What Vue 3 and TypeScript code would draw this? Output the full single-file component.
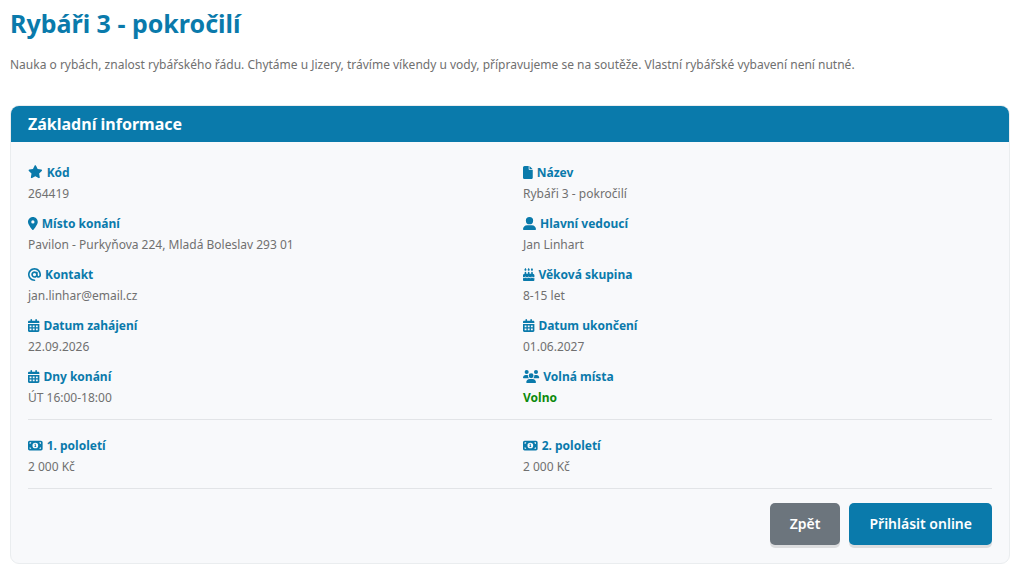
<script setup lang="ts">
interface Icon {
  width: number
  top?: number
  path: string
}

interface Field {
  icon: string
  label: string
  value: string
  free?: boolean
}

const icons: Record<string, Icon> = {
  star: {
    width: 576,
    top: 32,
    path: 'M316.9 18C311.6 7 300.4 0 288.1 0s-23.4 7-28.8 18L195 150.3 51.4 171.5c-12 1.8-22 10.2-25.7 21.7s-.7 24.2 7.9 32.7L137.8 329 113.2 474.7c-2 12 3 24.2 12.9 31.3s23 8 33.8 2.3l128.3-68.5 128.3 68.5c10.8 5.7 23.9 4.9 33.8-2.3s14.9-19.3 12.9-31.3L438.5 329 542.7 225.9c8.6-8.5 11.7-21.2 7.9-32.7s-13.7-19.9-25.7-21.7L381.2 150.3 316.9 18z',
  },
  file: {
    width: 384,
    path: 'M0 64C0 28.7 28.7 0 64 0H224V128c0 17.7 14.3 32 32 32H384V448c0 35.3-28.7 64-64 64H64c-35.3 0-64-28.7-64-64V64zM384 128H256V0L384 128z',
  },
  place: {
    width: 384,
    path: 'M215.7 499.2C267 435 384 279.4 384 192C384 86 298 0 192 0S0 86 0 192c0 87.4 117 243 168.3 307.2c12.3 15.3 35.1 15.3 47.4 0zM192 128a64 64 0 1 1 0 128 64 64 0 1 1 0-128z',
  },
  user: {
    width: 512,
    path: 'M256 288A144 144 0 1 0 256 0a144 144 0 1 0 0 288zm-94.7 32C72.2 320 0 392.2 0 481.3c0 17 13.8 30.7 30.7 30.7H481.3c17 0 30.7-13.8 30.7-30.7C512 392.2 439.8 320 350.7 320H161.3z',
  },
  at: {
    width: 512,
    path: 'M256 64C150 64 64 150 64 256s86 192 192 192c17.7 0 32 14.3 32 32s-14.3 32-32 32C114.6 512 0 397.4 0 256S114.6 0 256 0S512 114.6 512 256v32c0 53-43 96-96 96c-29.3 0-55.6-13.2-73.2-33.9C320 371.1 289.5 384 256 384c-70.7 0-128-57.3-128-128s57.3-128 128-128c27.9 0 53.7 8.9 74.7 24.1c5.7-5 13.1-8.1 21.3-8.1c17.7 0 32 14.3 32 32v112c0 17.7 14.3 32 32 32s32-14.3 32-32V256c0-106-86-192-192-192zm64 192a64 64 0 1 0-128 0 64 64 0 1 0 128 0z',
  },
  cake: {
    width: 448,
    path: 'M86.4 5.5L61.8 47.6C58 54.1 56 61.6 56 69.2V72c0 22.1 17.9 40 40 40s40-17.9 40-40V69.2c0-7.6-2-15-5.8-21.6L105.6 5.5C103.6 2.1 100 0 96 0s-7.6 2.1-9.6 5.5zm128 0L189.8 47.6c-3.8 6.5-5.8 14-5.8 21.6V72c0 22.1 17.9 40 40 40s40-17.9 40-40V69.2c0-7.6-2-15-5.8-21.6L233.6 5.5C231.6 2.1 228 0 224 0s-7.6 2.1-9.6 5.5zM317.8 47.6c-3.8 6.5-5.8 14-5.8 21.6V72c0 22.1 17.9 40 40 40s40-17.9 40-40V69.2c0-7.6-2-15-5.8-21.6L361.6 5.5C359.6 2.1 356 0 352 0s-7.6 2.1-9.6 5.5L317.8 47.6zM128 176c0-17.7-14.3-32-32-32s-32 14.3-32 32v48c-35.3 0-64 28.7-64 64v71c8.3 5.2 18.1 9 28.8 9c13.5 0 27.2-6.1 38.4-13.4c5.4-3.5 9.9-7.1 13-9.7c1.5-1.3 2.7-2.4 3.5-3.1c5.9-5.7 16.2-5.8 22.3-.2c3 2.8 6.3 5.5 9.6 8c11.5 8.9 25.7 18.4 44.4 18.4s32.9-9.5 44.4-18.4c3.3-2.5 6.6-5.2 9.6-8c6-5.5 15.9-5.5 22 0c3 2.8 6.3 5.5 9.6 8c11.5 8.9 25.7 18.4 44.4 18.4s32.9-9.5 44.4-18.4c3.3-2.5 6.6-5.2 9.6-8c6.1-5.6 16.4-5.5 22.3 .2c5.1 4.7 10.7 9 16.5 12.8c11.2 7.3 24.9 13.4 38.4 13.4c10.7 0 20.5-3.9 28.8-9V288c0-35.3-28.7-64-64-64V176c0-17.7-14.3-32-32-32s-32 14.3-32 32v48H256V176c0-17.7-14.3-32-32-32s-32 14.3-32 32v48H128V176zM448 394.6c-8.5 3.3-18.2 5.4-28.8 5.4c-22.5 0-42.4-9.9-55.8-18.6c-4.1-2.7-7.8-5.4-10.9-7.8c-2.8 2.4-6.1 5-9.8 7.5C329.8 390 310.6 400 288 400s-41.8-10-54.6-18.9c-3.5-2.4-6.7-4.9-9.4-7.2c-2.7 2.3-5.9 4.7-9.4 7.2C201.8 390 182.6 400 160 400s-41.8-10-54.6-18.9c-3.7-2.6-7-5.2-9.8-7.5c-3.1 2.4-6.8 5.1-10.9 7.8C71.2 390.1 51.3 400 28.8 400c-10.6 0-20.3-2.2-28.8-5.4V480c0 17.7 14.3 32 32 32H416c17.7 0 32-14.3 32-32V394.6z',
  },
  calendar: {
    width: 448,
    path: 'M128 0c17.7 0 32 14.3 32 32V64H288V32c0-17.7 14.3-32 32-32s32 14.3 32 32V64h48c26.5 0 48 21.5 48 48v48H0V112C0 85.5 21.5 64 48 64H96V32c0-17.7 14.3-32 32-32zM0 192H448V464c0 26.5-21.5 48-48 48H48c-26.5 0-48-21.5-48-48V192zM64 256v64h72v-64zM188 256v64h72v-64zM312 256v64h72v-64zM64 376v64h72v-64zM188 376v64h72v-64zM312 376v64h72v-64z',
  },
  group: {
    width: 640,
    path: 'M144 0a80 80 0 1 1 0 160A80 80 0 1 1 144 0zM512 0a80 80 0 1 1 0 160A80 80 0 1 1 512 0zM0 298.7C0 239.8 47.8 192 106.7 192h42.7c15.9 0 31 3.5 44.6 9.7c-1.3 7.2-1.9 14.7-1.9 22.3c0 38.2 16.8 72.5 43.3 96H21.3C9.6 320 0 310.4 0 298.7zM404.6 320c26.6-23.5 43.3-57.8 43.3-96c0-7.6-.7-15-1.9-22.3c13.6-6.3 28.7-9.7 44.6-9.7h42.7C592.2 192 640 239.8 640 298.7c0 11.8-9.6 21.3-21.3 21.3H404.6zM224 224a96 96 0 1 1 192 0 96 96 0 1 1-192 0zM128 485.3C128 411.7 187.7 352 261.3 352H378.7C452.3 352 512 411.7 512 485.3c0 14.7-11.9 26.7-26.7 26.7H154.7c-14.7 0-26.7-11.9-26.7-26.7z',
  },
  money: {
    width: 576,
    path: 'M64 64C28.7 64 0 92.7 0 128V384c0 35.3 28.7 64 64 64H512c35.3 0 64-28.7 64-64V128c0-35.3-28.7-64-64-64H64zm64 320H64V320c35.3 0 64 28.7 64 64zM64 192V128h64c0 35.3-28.7 64-64 64zM448 384c0-35.3 28.7-64 64-64v64H448zm64-192c-35.3 0-64-28.7-64-64h64v64zM176 256a112 112 0 1 1 224 0A112 112 0 1 1 176 256zM252 208c0 11 9 20 20 20v48h-4c-11 0-20 9-20 20s9 20 20 20h40c11 0 20-9 20-20s-9-20-20-20h-4v-68c0-11-9-20-20-20h-12c-11 0-20 9-20 20z',
  },
}

const details: Field[] = [
  { icon: 'star', label: 'Kód', value: '264419' },
  { icon: 'file', label: 'Název', value: 'Rybáři 3 - pokročilí' },
  { icon: 'place', label: 'Místo konání', value: 'Pavilon - Purkyňova 224, Mladá Boleslav 293 01' },
  { icon: 'user', label: 'Hlavní vedoucí', value: 'Jan Linhart' },
  { icon: 'at', label: 'Kontakt', value: 'jan.linhar@email.cz' },
  { icon: 'cake', label: 'Věková skupina', value: '8-15 let' },
  { icon: 'calendar', label: 'Datum zahájení', value: '22.09.2026' },
  { icon: 'calendar', label: 'Datum ukončení', value: '01.06.2027' },
  { icon: 'calendar', label: 'Dny konání', value: 'ÚT 16:00-18:00' },
  { icon: 'group', label: 'Volná místa', value: 'Volno', free: true },
]

const prices: Field[] = [
  { icon: 'money', label: '1. pololetí', value: '2 000 Kč' },
  { icon: 'money', label: '2. pololetí', value: '2 000 Kč' },
]

const sections: Field[][] = [details, prices]
</script>

<template>
  <main class="page">
    <h1 class="title">Rybáři 3 - pokročilí</h1>
    <p class="intro">
      Nauka o rybách, znalost rybářského řádu. Chytáme u Jizery, trávíme víkendy u vody, přípravujeme se na soutěže.
      Vlastní rybářské vybavení není nutné.
    </p>
    <section class="card">
      <h2 class="card-header">Základní informace</h2>
      <div class="card-body">
        <dl v-for="(section, index) in sections" :key="index" class="fields">
          <div v-for="field in section" :key="field.label" class="field">
            <dt class="label">
              <svg
                class="icon"
                :viewBox="`0 ${icons[field.icon].top ?? 0} ${icons[field.icon].width} 512`"
                aria-hidden="true"
              >
                <path :d="icons[field.icon].path" fill-rule="evenodd" />
              </svg>
              {{ field.label }}
            </dt>
            <dd class="value" :class="{ free: field.free }">{{ field.value }}</dd>
          </div>
        </dl>
        <div class="actions">
          <button type="button" class="button secondary">Zpět</button>
          <button type="button" class="button primary">Přihlásit online</button>
        </div>
      </div>
    </section>
  </main>
</template>

<style>
body {
  margin: 0;
  background: #fff;
}
</style>

<style scoped>
.page {
  padding: 7px 14px 12px 10px;
  font-family: 'Noto Sans', 'Open Sans', sans-serif;
  font-size: 12px;
  line-height: 21px;
  color: #707070;
}

.title {
  margin: 0;
  font-size: 25px;
  line-height: 32px;
  font-weight: 700;
  color: #0a7aab;
}

.intro {
  margin: 15px 0 30px;
}

.card {
  border: 1px solid #eaedef;
  border-radius: 9px;
  background: #f8f9fb;
  overflow: hidden;
}

.card-header {
  margin: 0;
  padding: 6px 17px;
  font-size: 16px;
  line-height: 24px;
  font-weight: 700;
  color: #fff;
  background: #0a7aab;
}

.card-body {
  padding: 20px 17px 18px;
}

.fields {
  display: grid;
  grid-template-columns: 1fr 1fr;
  row-gap: 9px;
  column-gap: 26px;
  margin: 0 0 15px;
  padding-bottom: 11px;
  border-bottom: 1px solid #e2e4e7;
}

.fields:last-of-type {
  margin-bottom: 14px;
}

.label {
  display: flex;
  align-items: center;
  gap: 4px;
  font-weight: 700;
  color: #0a7aab;
}

.icon {
  height: 13px;
  fill: currentColor;
  overflow: visible;
}

.value {
  margin: 0;
}

.free {
  font-weight: 700;
  color: #0c8a0c;
}

.actions {
  display: flex;
  justify-content: flex-end;
  gap: 9px;
}

.button {
  padding: 10px 20px;
  border: 0;
  border-radius: 5px;
  font-family: inherit;
  font-size: 14px;
  line-height: 22px;
  font-weight: 600;
  color: #fff;
  box-shadow: 0 3px 0 #dcdddf;
  cursor: pointer;
}

.primary {
  background: #0a7aab;
}

.secondary {
  background: #6c757d;
}
</style>
